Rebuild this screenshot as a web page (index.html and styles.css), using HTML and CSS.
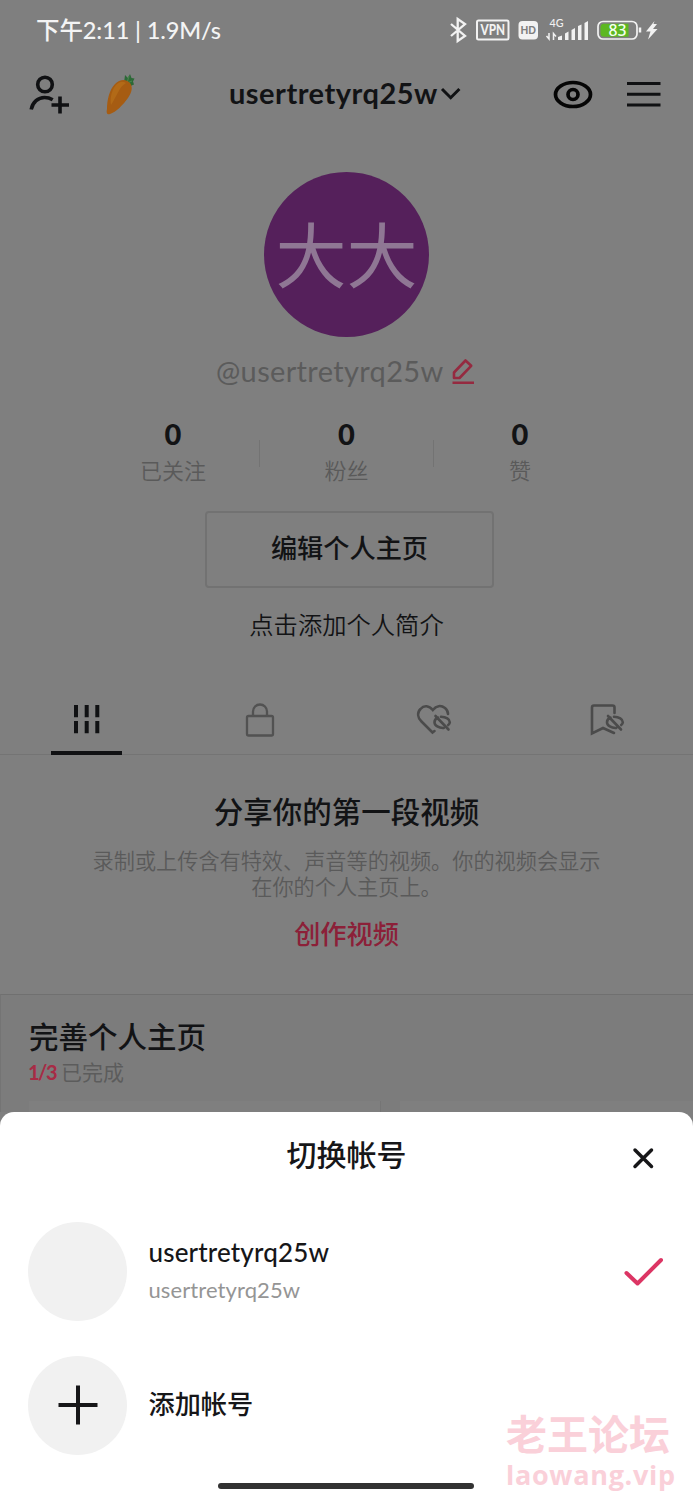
FILE: index.html
```
<!DOCTYPE html>
<html lang="zh-CN">
<head>
<meta charset="utf-8">
<title>切换帐号</title>
<link rel="stylesheet" href="styles.css">
</head>
<body>
<div class="screen">
  <header class="status">
    <span class="clock">下午2:11 | 1.9M/s</span>
    <svg class="status-icons" width="212" height="28" viewBox="448 16 212 28" fill="none">
      <path d="M451 24l14 12-7.300 5V19l7.300 5-14 12" stroke="#f2f2f2" stroke-width="2.300"/>
      <rect x="477" y="20.500" width="31.500" height="19" rx="1.500" stroke="#f2f2f2" stroke-width="2"/>
      <text x="480.500" y="34.800" class="badge" textLength="24.500" lengthAdjust="spacingAndGlyphs" fill="#f2f2f2">VPN</text>
      <rect x="518.500" y="21" width="19.500" height="18.500" rx="4" fill="#f2f2f2"/>
      <text x="520.500" y="34" class="badge small" textLength="15.500" lengthAdjust="spacingAndGlyphs" fill="#7f7f7f">HD</text>
      <text x="549.500" y="27" class="net" textLength="14" lengthAdjust="spacingAndGlyphs">4G</text>
      <path d="M546.500 36l2.500 3v-6M553.500 40v-6.500l2.500 3" stroke="#f2f2f2" stroke-width="1.500"/>
      <path d="M558 40v-3l4-1.500V40zM565 40v-6.500l3.500-2V40zM571.500 40V30l3.500-2v12zM578 40V26l3.500-1.500V40zM584.500 40V23l3.500-2v19z" fill="#f2f2f2"/>
      <rect x="598" y="21.500" width="39" height="17.500" rx="5" stroke="#f2f2f2" stroke-width="1.700"/>
      <path d="M604 23.800h24.500v13H604q-3.500 0-3.500-3.500v-6q0-3.500 3.500-3.500z" fill="#5cb821"/>
      <path d="M640 27.500v5" stroke="#f2f2f2" stroke-width="2.500"/>
      <text x="608.500" y="35.500" class="level" textLength="18" lengthAdjust="spacingAndGlyphs">83</text>
      <path d="M654.500 21L646 31.500h4.500L648 39.500l9.500-10.500H653l4-5h-3.500z" fill="#f2f2f2"/>
    </svg>
  </header>

  <nav class="topbar">
    <svg width="40" height="40" viewBox="29 74 40 40" fill="none" stroke="#101113" stroke-width="3.600">
      <circle cx="45" cy="84.500" r="7.300"/>
      <path d="M31.200 109.500c1.500-7.500 7-12 13.300-12 3.300 0 5.800.8 8.200 2.200M51.500 105h17.500M60 96.500v17"/>
    </svg>
    <svg class="carrot" width="30" height="44" viewBox="105 72 30 44">
      <path d="M124 83l1-8 3 3 2-4 1.500 4 3 .5-1.500 3 1 3-7 3z" fill="#2c6937"/>
      <path d="M127 83l2-7M127 83l5-2" stroke="#48824b" stroke-width="1.200"/>
      <path d="M115 84c5-5 11-5 15-1 3 4 2 9-2 15-5 7-12 14-18 16-3 1-4-1-3-5 0-8 2-19 8-25z" fill="#a65c12"/>
      <path d="M116 85c4-4 7-4 10-2-7 4-9 13-15 22-1-6 0-14 5-20z" fill="#b26a17"/>
    </svg>
    <h1 class="name">usertretyrq25w</h1>
    <svg class="chevron" width="22" height="16" viewBox="440 86 22 16" fill="none" stroke="#101113" stroke-width="3"><path d="M442 89l8.700 8.700 8.700-8.700"/></svg>
    <svg class="eye" width="42" height="30" viewBox="552 79 42 30" fill="none" stroke="#050505" stroke-width="3.700">
      <path d="M555.500 94.500c0-6.500 8-12 17.500-12s17.500 5.500 17.500 12-8 12-17.500 12-17.500-5.500-17.500-12z"/><circle cx="573" cy="94.500" r="5"/>
    </svg>
    <svg class="menu" width="34" height="28" viewBox="627 80 34 28" stroke="#101113" stroke-width="3"><path d="M627 83.500h33.500M627 94.200h33.500M627 105h33.500"/></svg>
  </nav>

  <main>
    <div class="avatar"><span>大大</span></div>
    <div class="handle">
      <span>@usertretyrq25w</span>
      <svg width="24" height="28" viewBox="451 358 24 28" fill="none" stroke="#952a40" stroke-width="2.600" stroke-linejoin="round"><path d="M454 378v-5.500l11.500-12 5.700 5.300L459.500 378zM452.500 382.800H474"/></svg>
    </div>
    <div class="stats">
      <div class="stat"><b>0</b><span>已关注</span></div>
      <i></i>
      <div class="stat"><b>0</b><span>粉丝</span></div>
      <i></i>
      <div class="stat"><b>0</b><span>赞</span></div>
    </div>
    <div class="edit">编辑个人主页</div>
    <p class="bio">点击添加个人简介</p>

    <div class="tabs">
      <div class="tab active"><svg width="40" height="40" viewBox="67 700 40 40" stroke="#101113" stroke-width="4"><path d="M76 705v12.300M86.700 705v12.300M97.300 705v12.300M76 721v12.300M86.700 721v12.300M97.300 721v12.300"/></svg></div>
      <div class="tab"><svg width="40" height="40" viewBox="240 700 40 40" fill="none" stroke="#525252" stroke-width="2.300"><rect x="247" y="716" width="26" height="19.500" rx="1.500"/><path d="M253 716v-4.500a7 7 0 0 1 14 0v4.500"/></svg></div>
      <div class="tab"><svg width="40" height="40" viewBox="413 700 40 40" fill="none" stroke="#4b4b4b" stroke-width="2.600" stroke-linecap="round"><path d="M434.500 731l-2 1.500-11-11c-4-4-4.500-9-1-12.500 3.500-4 8.500-3.500 12.300 1 3.500-4.500 8.200-5 12.200-2 2.500 2 3 4 3 6"/><path d="M441 716.700c5 .2 8.800 2.500 8.800 5.500 0 1-.6 2-1.600 2.800M438 717.500c-2.300 1-3.500 2.700-3.500 4.700 0 3.300 4.400 6 9.300 5.700M435.500 716l13 13.500"/></svg></div>
      <div class="tab"><svg width="40" height="40" viewBox="586 700 40 40" fill="none" stroke="#4b4b4b" stroke-width="2.600" stroke-linecap="round"><path d="M614 733l-11-5-11 5.500v-26q0-2 2-2h18.500q2 0 2 2v5.500"/><path d="M614 716.700c5 .2 8.800 2.500 8.800 5.500 0 1-.6 2-1.600 2.800M610.500 717.500c-2.300 1-3.500 2.700-3.500 4.700 0 3.300 4.400 6 9.300 5.700M608 716l13 13.500"/></svg></div>
    </div>

    <section class="empty">
      <h2>分享你的第一段视频</h2>
      <p>录制或上传含有特效、声音等的视频。你的视频会显示<br>在你的个人主页上。</p>
      <a>创作视频</a>
    </section>

    <section class="complete">
      <h2>完善个人主页</h2>
      <p><b>1/3</b><span>已完成</span></p>
      <div class="cards"><div class="card"></div><div class="card"></div></div>
    </section>
  </main>

  <section class="sheet">
    <div class="sheet-head">
      <h2>切换帐号</h2>
      <svg class="close" width="22" height="22" viewBox="632 1147 22 22" stroke="#161618" stroke-width="3.500" stroke-linecap="round"><path d="M635 1150l16.500 16.500M651.500 1150l-16.500 16.500"/></svg>
    </div>
    <div class="account">
      <div class="pic"></div>
      <div class="who"><b>usertretyrq25w</b><span>usertretyrq25w</span></div>
      <svg width="40" height="30" viewBox="624 1256 40 30" fill="none" stroke="#dc3564" stroke-width="4" stroke-linecap="round" stroke-linejoin="round"><path d="M626.500 1273l11 10.500 23.500-23.500"/></svg>
    </div>
    <div class="account">
      <div class="pic"><svg width="40" height="40" viewBox="0 0 40 40" stroke="#161618" stroke-width="4"><path d="M.5 20h39M20 .5v39"/></svg></div>
      <div class="add">添加帐号</div>
    </div>
    <div class="home-bar"></div>
    <div class="watermark"><span>老王论坛</span><b>laowang.vip</b></div>
  </section>
</div>
</body>
</html>
```
FILE: styles.css
```
* { box-sizing: border-box; margin: 0; padding: 0; }
body { background: #7f7f7f; }
svg { display: block; flex: none; }
h1, h2, p, span, b, a { white-space: nowrap; }

.screen {
  position: relative;
  width: 693px;
  height: 1500px;
  overflow: hidden;
  background: #7f7f7f;
  color: #121315;
  font-family: Lato, "Noto Sans CJK SC", sans-serif;
}

.status { display: flex; justify-content: space-between; align-items: center; height: 60px; padding: 0 33px 0 36px; color: #f4f4f4; }
.clock { font-size: 23.5px; font-weight: 500; line-height: 60px; letter-spacing: -.1px; }
.badge { font: 900 14.5px Lato, sans-serif; }
.badge.small { font-size: 11.5px; }
.net { font: 500 11px Lato, sans-serif; fill: #f2f2f2; }
.level { font: 500 15.5px "Noto Sans", sans-serif; fill: #f4fff0; }

.topbar { display: flex; align-items: center; height: 68px; padding: 0 32px 0 29px; }
.carrot { margin-left: 36px; }
.name { width: 210px; margin-left: 94px; padding-bottom: 2px; font-size: 29px; font-weight: 700; line-height: 40px; letter-spacing: .5px; }
.chevron { margin-left: 1px; }
.eye { margin-left: auto; }
.menu { margin-left: 33px; }

.avatar { display: flex; justify-content: center; align-items: center; width: 165px; height: 165px; margin: 44px auto 0; border-radius: 50%; background: #55205b; color: #8f7794; }
.avatar span { font-size: 71px; line-height: 71px; }
.handle { display: flex; align-items: center; gap: 8px; height: 70px; padding-left: 216px; color: #5b5b5b; font-size: 29px; line-height: 40px; }
.handle span { width: 227px; padding-bottom: 2px; letter-spacing: .35px; }

.stats { display: flex; justify-content: center; height: 104px; padding-top: 9px; }
.stats i { width: 1px; height: 27px; margin-top: 24px; background: #737373; }
.stat { width: 172.500px; text-align: center; }
.stat b { display: block; font-size: 29px; font-weight: 900; line-height: 36px; }
.stat span { display: block; font-size: 22px; font-weight: 350; line-height: 38px; color: #5a5a5a; }

.edit { width: 289px; height: 77px; margin-left: 205px; border: 2px solid #727272; border-radius: 4px; font-size: 26.200px; font-weight: 500; line-height: 70px; text-align: center; }
.bio { height: 76px; font-size: 24.300px; font-weight: 350; line-height: 74px; text-align: center; }

.tabs { display: grid; grid-template-columns: repeat(4, 1fr); height: 71px; margin-top: 20px; border-bottom: 1px solid #747474; }
.tab { display: flex; flex-direction: column; align-items: center; height: 71px; padding-top: 16px; }
.active::after { content: ""; width: 71px; height: 4px; margin-top: 11px; background: #101113; }

.empty { height: 239px; padding-top: 34px; text-align: center; }
.empty h2 { font-size: 29.500px; font-weight: 500; line-height: 46px; }
.empty p { margin-top: 13px; color: #5a5a5a; font-size: 21.170px; font-weight: 350; line-height: 26px; }
.empty a { display: block; margin-top: 14px; color: #8c2038; font-size: 26.200px; font-weight: 500; line-height: 40px; }

.complete { height: 118px; padding: 21px 0 0 28px; border-top: 1px solid #707070; border-left: 1px solid #747474; background: #7c7c7c; }
.complete h2 { font-size: 29.500px; font-weight: 500; line-height: 42px; }
.complete p { display: flex; margin-left: -1px; color: #5c5c5c; font-size: 21px; line-height: 28px; }
.complete p b { width: 33px; color: #a72b45; font-size: 20px; font-weight: 700; letter-spacing: -1.500px; line-height: 29px; }
.cards { display: grid; grid-template-columns: 352px 300px; gap: 19px; height: 12px; margin-top: 14px; }
.card { border: solid #757575; border-width: 0 1px 0 0; background: #7f7f7f; }

.sheet { position: absolute; left: 0; right: 0; bottom: 0; height: 388px; border-radius: 14px 14px 0 0; background: #fff; color: #161618; }
.sheet-head { display: grid; grid-template-columns: 1fr auto 1fr; align-items: center; height: 92px; }
.sheet-head h2 { grid-column: 2; padding-bottom: 8px; font-size: 30px; font-weight: 500; line-height: 80px; }
.close { justify-self: end; margin-right: 39px; }
.account { display: flex; align-items: center; height: 134px; padding: 0 29px 0 28px; }
.pic { display: flex; justify-content: center; align-items: center; width: 99px; height: 99px; border-radius: 50%; background: #f1f1f1; }
.who { flex: 1; margin-left: 21.500px; }
.who b, .who span { display: block; }
.who b { font-size: 26px; font-weight: 500; line-height: 38px; letter-spacing: .15px; }
.who span { font-size: 22px; line-height: 38px; letter-spacing: .1px; color: #959595; }
.add { margin-left: 21.500px; padding-bottom: 3px; font-size: 26.200px; font-weight: 500; line-height: 40px; }
.home-bar { width: 256px; height: 6px; margin: 11px 0 0 218px; border-radius: 3px; background: #323232; }
.watermark { position: absolute; left: 506px; top: 298px; color: #fad0d9; }
.watermark span, .watermark b { display: block; }
.watermark span { font-size: 41px; font-weight: 700; line-height: 50px; }
.watermark b { margin-top: -1px; font: 700 27px/32px "Open Sans", sans-serif; letter-spacing: .700px; }
```
